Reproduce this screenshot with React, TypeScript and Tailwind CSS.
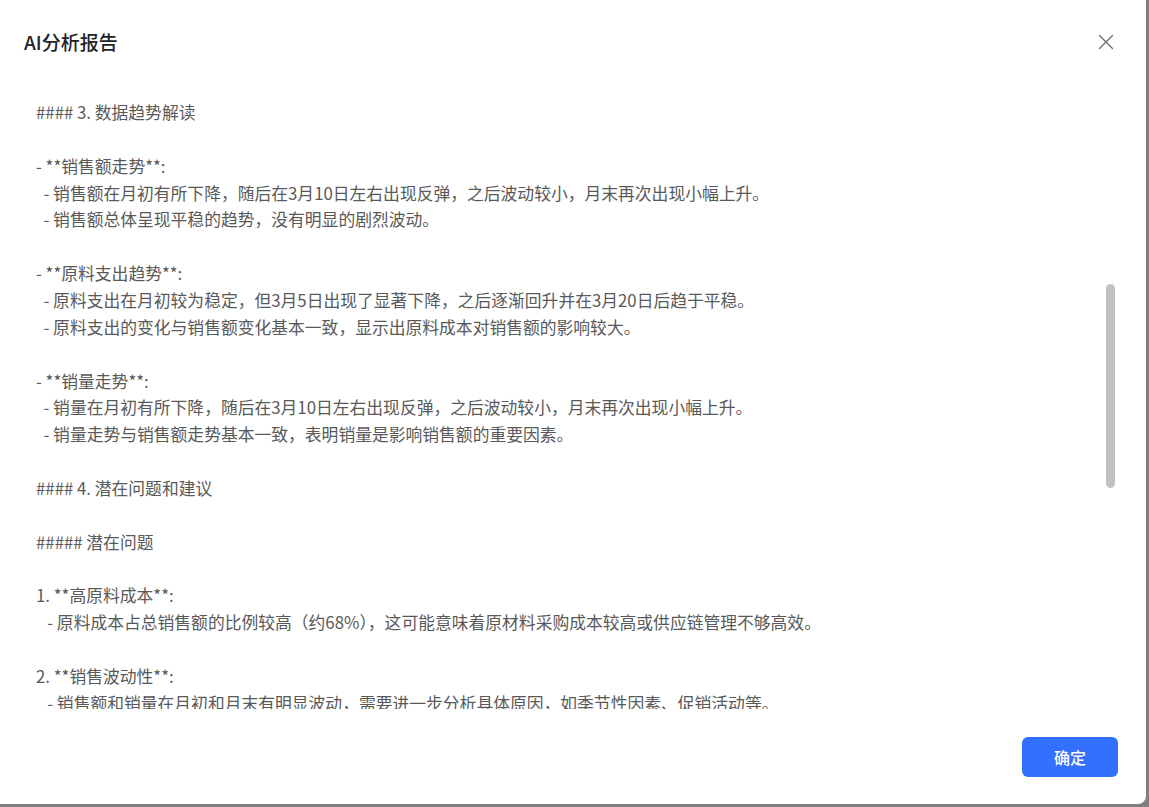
import React from "react";

const lines: string[] = [
  "#### 3. 数据趋势解读",
  "",
  "- **销售额走势**:",
  "  - 销售额在月初有所下降，随后在3月10日左右出现反弹，之后波动较小，月末再次出现小幅上升。",
  "  - 销售额总体呈现平稳的趋势，没有明显的剧烈波动。",
  "",
  "- **原料支出趋势**:",
  "  - 原料支出在月初较为稳定，但3月5日出现了显著下降，之后逐渐回升并在3月20日后趋于平稳。",
  "  - 原料支出的变化与销售额变化基本一致，显示出原料成本对销售额的影响较大。",
  "",
  "- **销量走势**:",
  "  - 销量在月初有所下降，随后在3月10日左右出现反弹，之后波动较小，月末再次出现小幅上升。",
  "  - 销量走势与销售额走势基本一致，表明销量是影响销售额的重要因素。",
  "",
  "#### 4. 潜在问题和建议",
  "",
  "##### 潜在问题",
  "",
  "1. **高原料成本**:",
  "   - 原料成本占总销售额的比例较高（约68%），这可能意味着原材料采购成本较高或供应链管理不够高效。",
  "",
  "2. **销售波动性**:",
  "   - 销售额和销量在月初和月末有明显波动，需要进一步分析具体原因，如季节性因素、促销活动等。",
  "",
  "##### 建议",
];

export default function App() {
  return (
    <div
      className="w-[1149px] h-[807px] bg-[#7f7f7f] overflow-hidden"
      style={{ fontFamily: '"Noto Sans CJK SC", "Noto Sans", sans-serif' }}
    >
      <div className="w-[1146px] h-[804px] bg-white rounded-br-lg flex flex-col">
        <div className="h-[84px] shrink-0 flex items-center justify-between pl-6 pr-7">
          <div className="text-[19px] font-medium text-[#1f2329] leading-6">AI分析报告</div>
          <button className="w-6 h-6 flex items-center justify-center text-[#646a73]">
            <svg width="16" height="16" viewBox="0 0 16 16" fill="none" stroke="currentColor" strokeWidth="1.3" strokeLinecap="round">
              <path d="M1.5 1.5L14.5 14.5M14.5 1.5L1.5 14.5" />
            </svg>
          </button>
        </div>
        <div className="relative h-[625px] shrink-0 overflow-hidden">
          <div className="pl-9 pt-[15px] pr-10 text-[16.8px] leading-[26.86px] text-[#595959] whitespace-pre">
            {lines.map((l, i) => (
              <div key={i} className="h-[26.86px]">{l}</div>
            ))}
          </div>
          <div className="absolute left-[1106px] top-[200px] w-[9px] h-[204px] rounded-full bg-[#c1c1c1]" />
        </div>
        <div className="flex-1 flex items-start justify-end pr-7 pt-[28px]">
          <button className="w-[96px] h-10 rounded-md bg-[#3370ff] text-white text-[16px] font-medium">
            确定
          </button>
        </div>
      </div>
    </div>
  );
}
